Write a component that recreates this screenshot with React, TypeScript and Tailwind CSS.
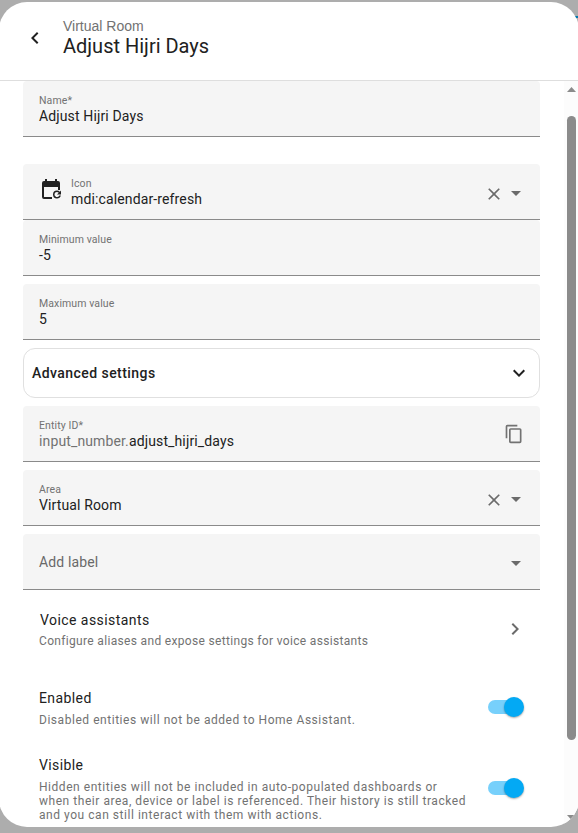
import type { ReactNode } from "react";

const ICONS = {
  back: "M15.41,16.58L10.83,12L15.41,7.41L14,6L8,12L14,18L15.41,16.58Z",
  next: "M8.59,16.58L13.17,12L8.59,7.41L10,6L16,12L10,18L8.59,16.58Z",
  down: "M7.41,8.58L12,13.17L16.59,8.58L18,10L12,16L6,10L7.41,8.58Z",
  close:
    "M19,6.41L17.59,5L12,10.59L6.41,5L5,6.41L10.59,12L5,17.59L6.41,19L12,13.41L17.59,19L19,17.59L13.41,12L19,6.41Z",
  menu: "M7,10L12,15L17,10H7Z",
  copy: "M19,21H8V7H19M19,5H8A2,2 0 0,0 6,7V21A2,2 0 0,0 8,23H19A2,2 0 0,0 21,21V7A2,2 0 0,0 19,5M16,1H4A2,2 0 0,0 2,3V17H4V3H16V1Z",
};

function Icon({ path, className }: { path: string; className: string }) {
  return (
    <svg viewBox="0 0 24 24" fill="currentColor" className={`shrink-0 ${className}`}>
      <path d={path} />
    </svg>
  );
}

function CalendarRefresh() {
  return (
    <svg viewBox="0 0 24 24" fill="currentColor" className="mt-[14px] mr-2 size-6 shrink-0 text-[#212121]">
      <path d="M5 3H6V1H8V3H16V1H18V3H19A2 2 0 0 1 21 5V12H19V9H5V19H13V21H5A2 2 0 0 1 3 19V5A2 2 0 0 1 5 3Z" />
      <path d="M20.83 13.67C20.11 12.95 19.11 12.5 18 12.5A4 4 0 0 0 18 20.5C19.86 20.5 21.43 19.23 21.87 17.5H20.24A2.5 2.5 0 1 1 18 14C18.69 14 19.31 14.28 19.76 14.74L18 16.5H22V12.5L20.83 13.67Z" />
    </svg>
  );
}

function Field({
  label,
  children,
  icon,
  actions,
  className = "",
}: {
  label: string;
  children?: ReactNode;
  icon?: ReactNode;
  actions?: ReactNode;
  className?: string;
}) {
  return (
    <div
      className={`flex h-14 shrink-0 rounded-t-[4px] border-b border-[#8a8a8a] bg-[#f5f5f5] pl-4 ${className}`}
    >
      {icon}
      {children ? (
        <div className="flex grow flex-col pt-[13px]">
          <span className="text-[10.5px] leading-[14px] tracking-[0.1px] text-[#727272]">{label}</span>
          <span className="-mt-px text-[14px] leading-[18px] tracking-[0.13px] text-[#212121]">{children}</span>
        </div>
      ) : (
        <span className="mt-px grow self-center text-[14px] tracking-[0.13px] text-[#696969]">{label}</span>
      )}
      {actions}
    </div>
  );
}

function SelectActions({ clear = true }: { clear?: boolean }) {
  return (
    <div className="mt-[3px] mr-3 flex items-center text-[#6b6b6b]">
      {clear && <Icon path={ICONS.close} className="mt-px size-5" />}
      <Icon path={ICONS.menu} className="size-6" />
    </div>
  );
}

function Switch({ className }: { className: string }) {
  return (
    <div className={`flex h-5 w-9 shrink-0 items-center ${className}`}>
      <div className="flex h-3.5 w-8 items-center rounded-full bg-[#77d0fb] pl-4">
        <div className="size-5 shrink-0 rounded-full bg-[#03a9f4] shadow-[0_1px_2px_rgba(0,0,0,0.35)]" />
      </div>
    </div>
  );
}

export default function App() {
  return (
    <div className="h-[833px] w-full overflow-hidden bg-[#adadad] pt-[2px] font-['Roboto',sans-serif]">
      <div className="relative">
        <div className="absolute top-[14px] right-0 h-[2px] w-2 bg-[#0378ad]" />
        <div className="relative -mx-px flex h-[825px] flex-col overflow-hidden rounded-[28px] bg-white">
          <header className="flex h-[79px] shrink-0 border-b border-[#dedede] pl-6">
            <Icon path={ICONS.back} className="mt-6 size-6 text-[#212121]" />
            <div className="pt-[15px] pl-4">
              <div className="font-['Liberation_Sans',sans-serif] text-[14px] leading-[18px] text-[#727272]">
                Virtual Room
              </div>
              <h1 className="text-[20px] leading-[22px] text-[#212121]">Adjust Hijri Days</h1>
            </div>
          </header>
          <div className="flex min-h-0 grow">
            <main className="flex grow flex-col overflow-hidden pr-6 pl-6">
              <Field label="Name*">Adjust Hijri Days</Field>
              <Field label="Icon" className="mt-[27px]" icon={<CalendarRefresh />} actions={<SelectActions />}>
                mdi:calendar-refresh
              </Field>
              <Field label="Minimum value">-5</Field>
              <Field label="Maximum value" className="mt-2">
                5
              </Field>
              <section className="mt-2 flex h-[50px] shrink-0 items-center justify-between rounded-xl border border-[#e0e0e0] pr-2 pl-2">
                <span className="text-[14px] font-medium tracking-[0.44px] text-[#212121]">Advanced settings</span>
                <Icon path={ICONS.down} className="size-6 text-[#212121]" />
              </section>
              <Field
                label="Entity ID*"
                className="mt-2"
                actions={<Icon path={ICONS.copy} className="mt-[18px] mr-4 size-5 text-[#727272]" />}
              >
                <span className="text-[#727272]">input_number.</span>adjust_hijri_days
              </Field>
              <Field label="Area" className="mt-2" actions={<SelectActions />}>
                Virtual Room
              </Field>
              <Field label="Add label" className="mt-2" actions={<SelectActions clear={false} />} />
              <div className="mt-[20px] flex h-10 shrink-0 justify-between pr-[13px] pl-4">
                <div>
                  <div className="pl-px text-[14px] leading-[20px] tracking-[0.44px] text-[#212121]">
                    Voice assistants
                  </div>
                  <div className="mt-px text-[12px] leading-5 tracking-[0.33px] text-[#727272]">
                    Configure aliases and expose settings for voice assistants
                  </div>
                </div>
                <Icon path={ICONS.next} className="mt-[7px] size-6 text-[#6b6b6b]" />
              </div>
              <div className="mt-[37px] flex h-[42px] shrink-0 items-center justify-between pr-4 pl-4">
                <div className="h-[42px]">
                  <div className="text-[14px] leading-[22px] tracking-[0.4px] text-[#212121]">Enabled</div>
                  <div className="mt-px text-[12px] leading-5 tracking-[0.54px] text-[#727272]">
                    Disabled entities will not be added to Home Assistant.
                  </div>
                </div>
                <Switch className="-mt-[2px]" />
              </div>
              <div className="mt-[25px] flex h-[68px] shrink-0 items-center justify-between pr-4 pl-4">
                <div>
                  <div className="mb-1 text-[14px] leading-[22px] tracking-[0.4px] text-[#212121]">Visible</div>
                  <div className="text-[12px] leading-[14px] tracking-[0.54px] whitespace-nowrap text-[#727272]">
                    Hidden entities will not be included in auto-populated dashboards or
                    <br />
                    when their area, device or label is referenced. Their history is still tracked
                    <br />
                    and you can still interact with them with actions.
                  </div>
                </div>
                <Switch className="mt-0" />
              </div>
            </main>
            <div className="flex w-[15px] shrink-0 flex-col items-center bg-[#fcfcfc] pt-[6px]">
              <svg viewBox="0 0 9 5" className="h-[5px] w-[9px] fill-[#8b8b8b]">
                <path d="M4.5 0L9 5H0Z" />
              </svg>
              <div className="mt-6 h-[624px] w-[9px] rounded-full bg-[#8b8b8b]" />
              <svg viewBox="0 0 9 5" className="mt-[75px] h-[5px] w-[9px] fill-[#8b8b8b]">
                <path d="M0 0H9L4.5 5Z" />
              </svg>
            </div>
          </div>
        </div>
      </div>
    </div>
  );
}
